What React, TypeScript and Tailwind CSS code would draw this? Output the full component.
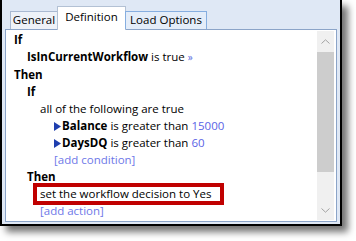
import React from "react";

const F = { fontFamily: '"Segoe UI", "Open Sans", "Liberation Sans", sans-serif' };

function Tri() {
  return (
    <svg width="7" height="9" viewBox="0 0 7 9" className="inline-block mr-[1px]">
      <path d="M0 0 L7 4.5 L0 9 Z" fill="#1f3fae" />
    </svg>
  );
}

export default function App() {
  return (
    <div className="w-[356px] h-[241px] bg-white relative overflow-hidden" style={F}>
      <div className="w-[342px] h-[226px] bg-[#dfe8f5] border-l-2 border-r-2 border-b-2 border-black shadow-[6px_6px_7px_rgba(0,0,0,0.55)] flex flex-col text-[11.5px] text-black">
        {/* tabs */}
        <div className="flex items-end h-[29px] pl-[8px] relative z-10 whitespace-nowrap">
          <div className="h-[18px] border border-b-0 border-[#a9b9d1] bg-[#eef2f8] leading-[16px] w-[48px] text-center">
            General
          </div>
          <div className="h-[24px] -mb-[1px] border border-b-0 border-[#b3c1d4] bg-white leading-[20px] w-[69px] -ml-[1px] text-center">
            Definition
          </div>
          <div className="h-[18px] border border-b-0 border-[#86aee0] bg-[#e4edf9] leading-[16px] w-[82px] -ml-[1px] text-center">
            Load Options
          </div>
        </div>
        {/* panel */}
        <div className="ml-[3px] w-[332px] h-[193px] border border-[#8ba4c8] bg-white flex">
          <div className="flex-1 pt-[1px] leading-[17px] whitespace-nowrap">
            <div className="pl-[8px] font-bold">If</div>
            <div className="pl-[21px]">
              <span className="font-bold">IsInCurrentWorkflow</span> is true{" "}
              <span className="text-[#5566e0] text-[10px]">»</span>
            </div>
            <div className="pl-[8px] font-bold">Then</div>
            <div className="pl-[21px] font-bold">If</div>
            <div className="pl-[34px]">all of the following are true</div>
            <div className="pl-[48px]">
              <Tri />
              <span className="font-bold">Balance</span> is greater than{" "}
              <span className="text-[#5a62e6]">15000</span>
            </div>
            <div className="pl-[48px]">
              <Tri />
              <span className="font-bold">DaysDQ</span> is greater than{" "}
              <span className="text-[#5a62e6]">60</span>
            </div>
            <div className="pl-[48px] text-[#6e78e8]">[add condition]</div>
            <div className="pl-[21px] font-bold">Then</div>
            <div className="pl-[27px] h-[17px] flex items-center">
              <div className="border-[4px] border-[#c00000] h-[22px] w-[191px] pl-[3px] flex items-center">
                set the workflow decision to Yes
              </div>
            </div>
            <div className="pl-[34px] text-[#6e78e8]">[add action]</div>
          </div>
          <div className="w-[17px] mt-[1px] mb-[1px] mr-[2px] bg-[#f0f0f0] flex flex-col">
            <div className="h-[21px] flex items-center justify-center">
              <svg width="9" height="5" viewBox="0 0 9 5">
                <path d="M0.5 4.5 L4.5 0.8 L8.5 4.5" fill="none" stroke="#a3a3a3" strokeWidth="1" />
              </svg>
            </div>
            <div className="h-[120px] bg-[#cdcdcd]" />
            <div className="flex-1 flex items-end justify-center pb-[7px]">
              <svg width="9" height="5" viewBox="0 0 9 5">
                <path d="M0.5 0.5 L4.5 4.2 L8.5 0.5" fill="none" stroke="#a3a3a3" strokeWidth="1" />
              </svg>
            </div>
          </div>
        </div>
      </div>
    </div>
  );
}
